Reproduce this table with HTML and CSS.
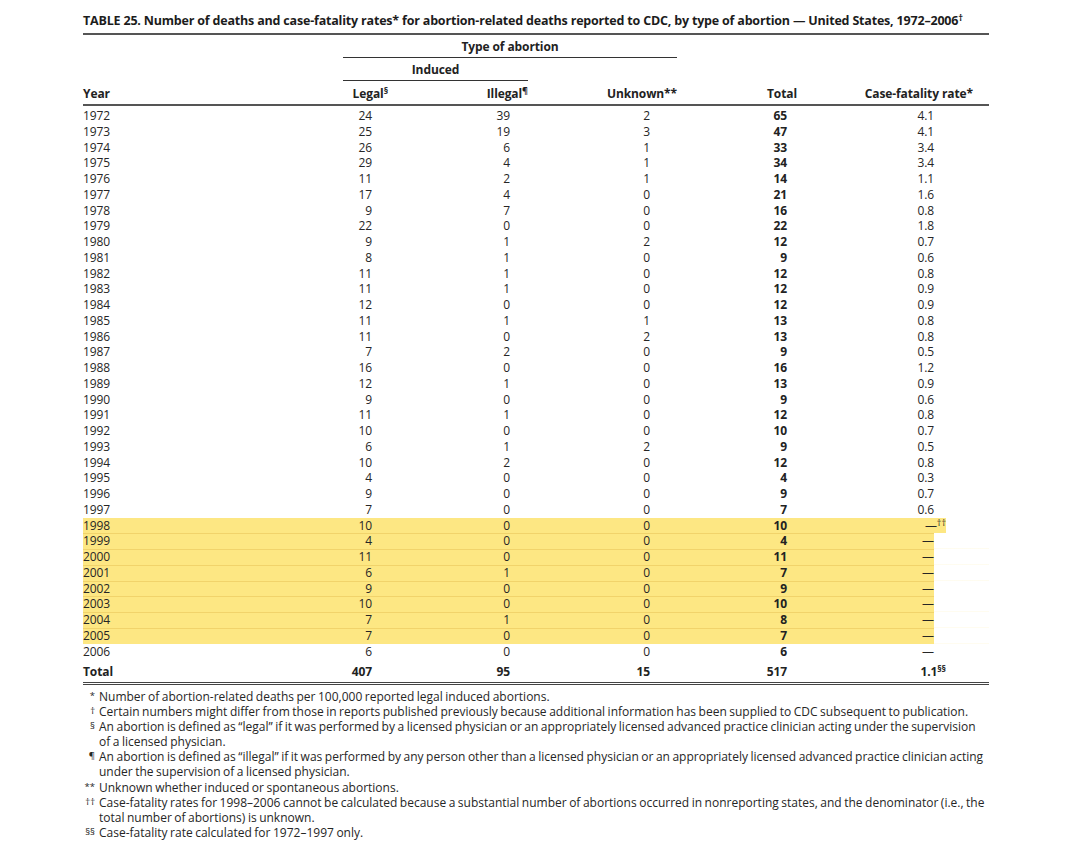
FILE: index.html
```html
<!DOCTYPE html>
<html lang="en">
<head>
<meta charset="utf-8">
<title>Table 25</title>
<link rel="stylesheet" href="styles.css">
</head>
<body>
<div class="page">
  <h1 class="title">TABLE 25. Number of deaths and case-fatality rates* for abortion-related deaths reported to CDC, by type of abortion — United States, 1972–2006<span class="mk">†</span></h1>
  <table class="tbl">
    <colgroup>
      <col class="c-year"><col class="c-legal"><col class="c-illegal"><col class="c-unknown"><col class="c-total"><col class="c-rate">
    </colgroup>
    <thead>
      <tr class="h1">
        <th></th>
        <th colspan="3"><div class="span-head">Type of abortion</div></th>
        <th></th><th></th>
      </tr>
      <tr class="h2">
        <th></th>
        <th colspan="2"><div class="span-head">Induced</div></th>
        <th></th><th></th><th></th>
      </tr>
      <tr class="h3">
        <th class="year">Year</th>
        <th class="legal">Legal<span class="mk">§</span></th>
        <th class="illegal">Illegal<span class="mk">¶</span></th>
        <th class="unknown">Unknown**</th>
        <th class="total">Total</th>
        <th class="rate">Case-fatality rate*</th>
      </tr>
    </thead>
    <tbody>
      <tr><td class="year">1972</td><td class="legal">24</td><td class="illegal">39</td><td class="unknown">2</td><td class="total">65</td><td class="rate">4.1</td></tr>
      <tr><td class="year">1973</td><td class="legal">25</td><td class="illegal">19</td><td class="unknown">3</td><td class="total">47</td><td class="rate">4.1</td></tr>
      <tr><td class="year">1974</td><td class="legal">26</td><td class="illegal">6</td><td class="unknown">1</td><td class="total">33</td><td class="rate">3.4</td></tr>
      <tr><td class="year">1975</td><td class="legal">29</td><td class="illegal">4</td><td class="unknown">1</td><td class="total">34</td><td class="rate">3.4</td></tr>
      <tr><td class="year">1976</td><td class="legal">11</td><td class="illegal">2</td><td class="unknown">1</td><td class="total">14</td><td class="rate">1.1</td></tr>
      <tr><td class="year">1977</td><td class="legal">17</td><td class="illegal">4</td><td class="unknown">0</td><td class="total">21</td><td class="rate">1.6</td></tr>
      <tr><td class="year">1978</td><td class="legal">9</td><td class="illegal">7</td><td class="unknown">0</td><td class="total">16</td><td class="rate">0.8</td></tr>
      <tr><td class="year">1979</td><td class="legal">22</td><td class="illegal">0</td><td class="unknown">0</td><td class="total">22</td><td class="rate">1.8</td></tr>
      <tr><td class="year">1980</td><td class="legal">9</td><td class="illegal">1</td><td class="unknown">2</td><td class="total">12</td><td class="rate">0.7</td></tr>
      <tr><td class="year">1981</td><td class="legal">8</td><td class="illegal">1</td><td class="unknown">0</td><td class="total">9</td><td class="rate">0.6</td></tr>
      <tr><td class="year">1982</td><td class="legal">11</td><td class="illegal">1</td><td class="unknown">0</td><td class="total">12</td><td class="rate">0.8</td></tr>
      <tr><td class="year">1983</td><td class="legal">11</td><td class="illegal">1</td><td class="unknown">0</td><td class="total">12</td><td class="rate">0.9</td></tr>
      <tr><td class="year">1984</td><td class="legal">12</td><td class="illegal">0</td><td class="unknown">0</td><td class="total">12</td><td class="rate">0.9</td></tr>
      <tr><td class="year">1985</td><td class="legal">11</td><td class="illegal">1</td><td class="unknown">1</td><td class="total">13</td><td class="rate">0.8</td></tr>
      <tr><td class="year">1986</td><td class="legal">11</td><td class="illegal">0</td><td class="unknown">2</td><td class="total">13</td><td class="rate">0.8</td></tr>
      <tr><td class="year">1987</td><td class="legal">7</td><td class="illegal">2</td><td class="unknown">0</td><td class="total">9</td><td class="rate">0.5</td></tr>
      <tr><td class="year">1988</td><td class="legal">16</td><td class="illegal">0</td><td class="unknown">0</td><td class="total">16</td><td class="rate">1.2</td></tr>
      <tr><td class="year">1989</td><td class="legal">12</td><td class="illegal">1</td><td class="unknown">0</td><td class="total">13</td><td class="rate">0.9</td></tr>
      <tr><td class="year">1990</td><td class="legal">9</td><td class="illegal">0</td><td class="unknown">0</td><td class="total">9</td><td class="rate">0.6</td></tr>
      <tr><td class="year">1991</td><td class="legal">11</td><td class="illegal">1</td><td class="unknown">0</td><td class="total">12</td><td class="rate">0.8</td></tr>
      <tr><td class="year">1992</td><td class="legal">10</td><td class="illegal">0</td><td class="unknown">0</td><td class="total">10</td><td class="rate">0.7</td></tr>
      <tr><td class="year">1993</td><td class="legal">6</td><td class="illegal">1</td><td class="unknown">2</td><td class="total">9</td><td class="rate">0.5</td></tr>
      <tr><td class="year">1994</td><td class="legal">10</td><td class="illegal">2</td><td class="unknown">0</td><td class="total">12</td><td class="rate">0.8</td></tr>
      <tr><td class="year">1995</td><td class="legal">4</td><td class="illegal">0</td><td class="unknown">0</td><td class="total">4</td><td class="rate">0.3</td></tr>
      <tr><td class="year">1996</td><td class="legal">9</td><td class="illegal">0</td><td class="unknown">0</td><td class="total">9</td><td class="rate">0.7</td></tr>
      <tr><td class="year">1997</td><td class="legal">7</td><td class="illegal">0</td><td class="unknown">0</td><td class="total">7</td><td class="rate">0.6</td></tr>
      <tr class="hl hl-first hl-ext"><td class="year">1998</td><td class="legal">10</td><td class="illegal">0</td><td class="unknown">0</td><td class="total">10</td><td class="rate">—<span class="mk hang">††</span></td></tr>
      <tr class="hl"><td class="year">1999</td><td class="legal">4</td><td class="illegal">0</td><td class="unknown">0</td><td class="total">4</td><td class="rate">—</td></tr>
      <tr class="hl"><td class="year">2000</td><td class="legal">11</td><td class="illegal">0</td><td class="unknown">0</td><td class="total">11</td><td class="rate">—</td></tr>
      <tr class="hl"><td class="year">2001</td><td class="legal">6</td><td class="illegal">1</td><td class="unknown">0</td><td class="total">7</td><td class="rate">—</td></tr>
      <tr class="hl"><td class="year">2002</td><td class="legal">9</td><td class="illegal">0</td><td class="unknown">0</td><td class="total">9</td><td class="rate">—</td></tr>
      <tr class="hl"><td class="year">2003</td><td class="legal">10</td><td class="illegal">0</td><td class="unknown">0</td><td class="total">10</td><td class="rate">—</td></tr>
      <tr class="hl"><td class="year">2004</td><td class="legal">7</td><td class="illegal">1</td><td class="unknown">0</td><td class="total">8</td><td class="rate">—</td></tr>
      <tr class="hl"><td class="year">2005</td><td class="legal">7</td><td class="illegal">0</td><td class="unknown">0</td><td class="total">7</td><td class="rate">—</td></tr>
      <tr><td class="year">2006</td><td class="legal">6</td><td class="illegal">0</td><td class="unknown">0</td><td class="total">6</td><td class="rate">—</td></tr>
    </tbody>
    <tfoot>
      <tr class="sum"><td class="year">Total</td><td class="legal">407</td><td class="illegal">95</td><td class="unknown">15</td><td class="total">517</td><td class="rate">1.1<span class="mk hang">§§</span></td></tr>
    </tfoot>
  </table>
  <ul class="notes">
    <li><span class="nm">*</span><span class="nt">Number of abortion-related deaths per 100,000 reported legal induced abortions.</span></li>
    <li><span class="nm">†</span><span class="nt">Certain numbers might differ from those in reports published previously because additional information has been supplied to CDC subsequent to publication.</span></li>
    <li><span class="nm">§</span><span class="nt">An abortion is defined as “legal” if it was performed by a licensed physician or an appropriately licensed advanced practice clinician acting under the supervision<br>of a licensed physician.</span></li>
    <li><span class="nm">¶</span><span class="nt">An abortion is defined as “illegal” if it was performed by any person other than a licensed physician or an appropriately licensed advanced practice clinician acting<br>under the supervision of a licensed physician.</span></li>
    <li><span class="nm">**</span><span class="nt">Unknown whether induced or spontaneous abortions.</span></li>
    <li><span class="nm">††</span><span class="nt">Case-fatality rates for 1998–2006 cannot be calculated because a substantial number of abortions occurred in nonreporting states, and the denominator (i.e., the<br>total number of abortions) is unknown.</span></li>
    <li><span class="nm">§§</span><span class="nt">Case-fatality rate calculated for 1972–1997 only.</span></li>
  </ul>
</div>
</body>
</html>
```

FILE: styles.css
```css
* { box-sizing: border-box; }

body {
  margin: 0;
  background: #fff;
  color: #262626;
  font-family: "Open Sans", "Liberation Sans", sans-serif;
}

.page {
  width: 906px;
  margin-left: 83px;
  padding-top: 12px;
}

.title {
  margin: 0;
  font-size: 12.5px;
  font-weight: 700;
  line-height: 18px;
  letter-spacing: -0.19px;
  color: #1c1c1c;
  white-space: nowrap;
  padding-bottom: 3px;
  border-bottom: 2px solid #555;
}

.mk {
  font-size: 0.75em;
  line-height: 0;
  vertical-align: 0.42em;
  letter-spacing: 0;
}

.tbl {
  width: 906px;
  border-collapse: collapse;
  table-layout: fixed;
  font-size: 12px;
  letter-spacing: -0.1px;
}

.tbl th, .tbl td { padding: 0; }

.c-year { width: 260px; }
.c-legal { width: 92px; }
.c-illegal { width: 93px; }
.c-unknown { width: 149px; }
.c-total { width: 173px; }
.c-rate { width: 139px; }

.tbl thead th {
  font-weight: 700;
  color: #222;
  line-height: 16px;
  text-align: right;
}

.span-head {
  text-align: center;
  padding-bottom: 2px;
  border-bottom: 1px solid #333;
}

.h1 th { padding-top: 4px; }
.h2 th { padding-top: 4px; }

.h3 th {
  padding-top: 4.5px;
  padding-bottom: 2.5px;
  border-bottom: 2px solid #555;
}

.h3 .year { text-align: left; }
.h3 .legal { padding-right: 47px; }
.h3 .illegal { padding-right: 0; }
.h3 .unknown { padding-right: 0; }
.h3 .total { padding-right: 53px; }
.h3 .rate { padding-right: 16px; }

.tbl tbody td,
.tbl tfoot td {
  line-height: 15.75px;
  height: 15.75px;
  text-align: right;
  white-space: nowrap;
}

.tbl tbody tr:first-child td { padding-top: 2px; height: 17.75px; }

.tbl td.year { text-align: left; }
.tbl td.legal { padding-right: 63px; }
.tbl td.illegal { padding-right: 18px; }
.tbl td.unknown { padding-right: 27px; }
.tbl td.total { padding-right: 63px; font-weight: 700; color: #222; }
.tbl td.rate { padding-right: 55px; }

.hang { margin-right: -12px; }

.hl td {
  background: linear-gradient(#f1d36b, #f1d36b) top / 100% 1px no-repeat, #fde783;
}
.hl-first td {
  background: #fde783;
}
.hl td.rate {
  background:
    linear-gradient(#fff, #fff) right / 55px 100% no-repeat,
    linear-gradient(#f1d36b, #f1d36b) top / 100% 1px no-repeat,
    #fde783;
}
.hl-ext td.rate {
  background:
    linear-gradient(#fff, #fff) right / 43px 100% no-repeat,
    #fde783;
}

.sum td {
  font-weight: 700;
  color: #222;
  padding-top: 5px;
  padding-bottom: 2px;
  height: 22.75px;
  border-bottom: 3px double #444;
}

.notes {
  list-style: none;
  margin: 4px 0 0;
  padding: 0;
  font-size: 12px;
  line-height: 15.1px;
  letter-spacing: 0;
  word-spacing: -0.6px;
}

.notes li {
  display: flex;
  gap: 4px;
}

.nm {
  flex: 0 0 12px;
  text-align: right;
  font-size: 9.5px;
  line-height: 13px;
  letter-spacing: 0;
  word-spacing: 0;
}

.nt { flex: 1; }
```
